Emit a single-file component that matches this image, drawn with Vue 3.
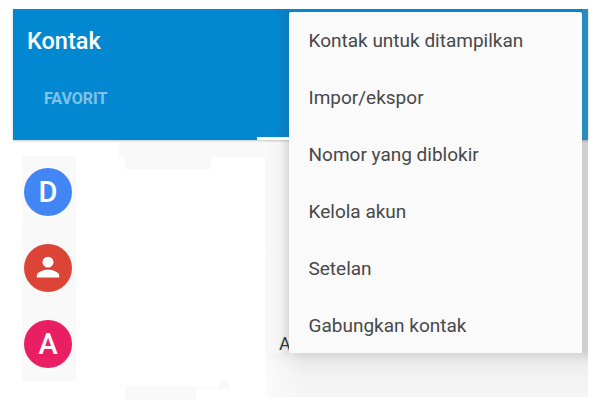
<script setup>
const menu = ['Kontak untuk ditampilkan', 'Impor/ekspor', 'Nomor yang diblokir', 'Kelola akun', 'Setelan', 'Gabungkan kontak']
const patches = [
  { id: 'top-strip', left: 106, top: 2, width: 146, height: 15 },
  { id: 'top-notch', left: 112, top: 17, width: 86, height: 12 },
  { id: 'low-block', left: 112, top: 246, width: 71, height: 14 },
  { id: 'low-line', left: 183, top: 248, width: 22, height: 1 },
  { id: 'low-tip', left: 205, top: 241, width: 11, height: 8 }
]
</script>

<template>
  <div class="screen">
    <header class="appbar">
      <div class="title">Kontak</div>
      <nav class="tabs">
        <span class="tab">FAVORIT</span>
        <span class="indicator"></span>
      </nav>
      <span class="scrim"></span>
    </header>
    <main class="body">
      <div class="avatars">
        <div class="avatar blue">D</div>
        <div class="avatar red">
          <svg viewBox="0 0 24 24" width="32" height="32" aria-hidden="true">
            <circle cx="12" cy="7.6" r="4.1" fill="#fff" />
            <path d="M3.6 19.2v-1.4c0-2.9 5.6-4.4 8.4-4.4s8.4 1.5 8.4 4.4v1.4z" fill="#fff" />
          </svg>
        </div>
        <div class="avatar pink">A</div>
      </div>
      <div
        v-for="p in patches"
        :key="p.id"
        class="patch"
        :style="{ left: p.left + 'px', top: p.top + 'px', width: p.width + 'px', height: p.height + 'px' }"
      ></div>
      <div class="band"></div>
      <div class="behind">A</div>
    </main>
    <ul class="menu">
      <li v-for="item in menu" :key="item">{{ item }}</li>
    </ul>
  </div>
</template>

<style>
html, body { background: #fff; }
</style>

<style scoped>
.screen {
  position: relative;
  width: 575px;
  margin: 9px 0 0 13px;
  font-family: Roboto, "Liberation Sans", sans-serif;
}
.appbar {
  height: 131px;
  background: linear-gradient(to right, #0288d1 0, #0288d1 262px, #0b7cba 276px, #0288d1 276px);
  display: flex;
  flex-direction: column;
  box-shadow: 0 1px 2px rgba(0, 0, 0, .22);
  position: relative;
  z-index: 1;
}
.title {
  padding: 15px 0 0 14px;
  height: 34px;
  font-size: 23.5px;
  line-height: 34px;
  font-weight: 500;
  color: #fff;
}
.tabs {
  position: relative;
  flex: 1;
  display: flex;
  align-items: flex-start;
  padding: 31px 0 0 31px;
}
.tab {
  font-size: 16px;
  line-height: 20px;
  font-weight: 700;
  color: rgba(255, 255, 255, .5);
}
.indicator {
  position: absolute;
  left: 244px;
  bottom: 0;
  width: 32px;
  height: 3px;
  background: #fff;
}
.scrim {
  position: absolute;
  right: 0;
  top: 0;
  bottom: 0;
  width: 6px;
  background: #2a8bc0;
}
.body {
  position: relative;
  height: 260px;
  background: #fff;
}
.avatars {
  position: absolute;
  left: 9px;
  top: 16px;
  width: 54px;
  height: 225px;
  box-sizing: border-box;
  padding: 12px 0 0 2px;
  background: #f9f9f9;
  display: flex;
  flex-direction: column;
  gap: 28px;
}
.avatar {
  width: 48px;
  height: 48px;
  border-radius: 50%;
  display: flex;
  align-items: center;
  justify-content: center;
  color: #fff;
  font-size: 29px;
  font-weight: 500;
}
.blue { background: #4285f4; }
.red { background: #db4437; }
.pink { background: #e91e63; }
.band {
  position: absolute;
  left: 252px;
  top: 0;
  width: 323px;
  height: 257px;
  background:
    linear-gradient(to right, #d0d0d0, #d0d0d0) right top / 6px 213px no-repeat,
    linear-gradient(to right, #f9f9f9 0, #f5f5f5 14px, #e2e2e2 22px, #d8d8d8 24px) left top / 24px 213px no-repeat,
    linear-gradient(to right, #fbfbfb 0, rgba(251, 251, 251, 0) 40px) left 213px / 100% 44px no-repeat,
    linear-gradient(to bottom, #d6d6d6 0, #ebebeb 10px, #f2f2f2 22px, #f5f5f5 44px) left 213px / 100% 44px no-repeat;
}
.patch {
  position: absolute;
  background: #f9f9f9;
}
.behind {
  position: absolute;
  left: 266px;
  top: 192px;
  font-size: 18px;
  line-height: 24px;
  color: #333;
}
.menu {
  position: absolute;
  z-index: 2;
  left: 276px;
  top: 3px;
  width: 293px;
  height: 341px;
  margin: 0;
  padding: 0;
  list-style: none;
  background: #fafafa;
  border-radius: 2px;
}
.menu li {
  height: 57px;
  padding-left: 19.5px;
  line-height: 57px;
  font-size: 19px;
  color: #484848;
  white-space: nowrap;
}
</style>
